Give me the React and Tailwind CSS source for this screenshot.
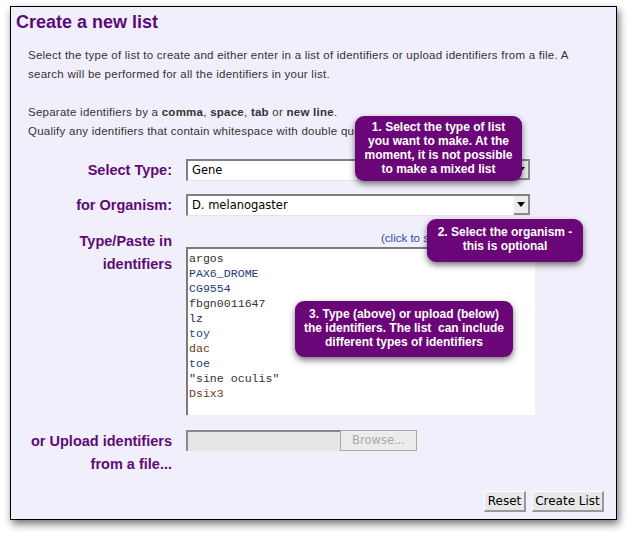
import React from "react";

const sans = "font-['Liberation_Sans',Arial,sans-serif]";
const ui = "font-['DejaVu_Sans',sans-serif]";

const ids = [
  ["argos", "text-[#3a2c2c]"],
  ["PAX6_DROME", "text-[#1d3a78]"],
  ["CG9554", "text-[#1d3a78]"],
  ["fbgn0011647", "text-[#333333]"],
  ["lz", "text-[#2a2a58]"],
  ["toy", "text-[#2a3f70]"],
  ["dac", "text-[#6a3a1a]"],
  ["toe", "text-[#1d3a78]"],
  ['"sine oculis"', "text-[#333333]"],
  ["Dsix3", "text-[#6a3a1a]"],
];

const Label = ({ children }) => (
  <div className={`w-[161px] shrink-0 text-right text-[14.5px] leading-[23px] font-bold text-[#5e0b74] ${sans}`}>
    {children}
  </div>
);

const FakeSelect = ({ value }) => (
  <div className="relative w-[344px] h-[22px] bg-white border-t-2 border-l-2 border-[#808080] border-b border-b-[#e4e4e4] flex items-center">
    <span className={`pl-[4px] text-[11.5px] text-black ${ui}`}>{value}</span>
    <div className="absolute right-0 top-[0px] w-[16px] h-[19px] bg-[#ececec] border-r-2 border-b-2 border-[#8c8c8c] flex items-center justify-center">
      <div className="w-0 h-0 border-l-[4px] border-r-[4px] border-t-[5px] border-l-transparent border-r-transparent border-t-black" />
    </div>
  </div>
);

const Tip = ({ className, children }) => (
  <div
    className={`absolute bg-[#6b0678] rounded-[9px] text-white text-center font-bold text-[12px] leading-[14px] shadow-[0_3px_6px_rgba(0,0,0,0.55)] ${sans} ${className}`}
  >
    {children}
  </div>
);

export default function App() {
  return (
    <div className="relative w-[627px] h-[533px] bg-white overflow-hidden">
      <div className="ml-[10px] mt-[6px] w-[607px] h-[514px] border border-black bg-[#f2effc] shadow-[2px_4px_8px_rgba(0,0,0,0.55)]">
        <h1 className={`pl-[5px] pt-[4px] text-[18px] leading-[22px] font-bold text-[#5c0a7a] ${sans}`}>
          Create a new list
        </h1>

        <div className={`ml-[17px] mt-[13px] w-[560px] text-[11.5px] leading-[19px] tracking-[0.25px] text-[#333333] ${sans}`}>
          <p>
            Select the type of list to create and either enter in a list of identifiers or upload identifiers from a file. A
            search will be performed for all the identifiers in your list.
          </p>
          <p className="mt-[19px]">
            Separate identifiers by a <b>comma</b>, <b>space</b>, <b>tab</b> or <b>new line</b>.
            <br />
            Qualify any identifiers that contain whitespace with double quotes.
          </p>
        </div>

        <div className="mt-[18px]">
          <div className="flex items-center h-[22px]">
            <Label>Select Type:</Label>
            <div className="ml-[14px]">
              <FakeSelect value="Gene" />
            </div>
          </div>

          <div className="flex items-center h-[22px] mt-[13px]">
            <Label>for Organism:</Label>
            <div className="ml-[14px]">
              <FakeSelect value="D. melanogaster" />
            </div>
          </div>

          <div className="flex items-start mt-[14px]">
            <Label>
              Type/Paste in
              <br />
              identifiers
            </Label>
            <div className="ml-[14px]">
              <div className={`h-[17px] leading-[17px] pl-[195px] text-[11.5px] text-[#1f4fa8] ${sans}`}>
                (click to see an example)
              </div>
              <div className="w-[349px] h-[168px] bg-white border-t-2 border-l-2 border-[#7a7a7a] pt-[2px] pl-px">
                {ids.map(([t, c]) => (
                  <div key={t} className={`font-['Liberation_Mono',monospace] text-[11.6px] leading-[15px] whitespace-pre ${c}`}>
                    {t}
                  </div>
                ))}
              </div>
            </div>
          </div>

          <div className="flex items-start mt-[15px]">
            <Label>
              or Upload identifiers
              <br />
              from a file...
            </Label>
            <div className="ml-[14px] flex">
              <div className="w-[154px] h-[21px] bg-[#e6e6e6] border-t-2 border-l-2 border-[#8a8a8a]" />
              <div className={`w-[77px] h-[21px] bg-[#ececec] border border-[#a8a8a8] flex items-center justify-center text-[11.5px] text-[#a8a8a8] ${ui}`}>
                Browse...
              </div>
            </div>
          </div>

          <div className="flex justify-end gap-[6px] pr-[12px] mt-[15px]">
            <button className={`w-[42px] h-[21px] bg-[#e8e8e8] border-t border-l border-white border-r-2 border-b-2 border-r-[#999999] border-b-[#999999] text-[12px] text-black ${ui}`}>
              Reset
            </button>
            <button className={`w-[72px] h-[21px] bg-[#e8e8e8] border-t border-l border-white border-r-2 border-b-2 border-r-[#999999] border-b-[#999999] text-[12px] text-black ${ui}`}>
              Create List
            </button>
          </div>
        </div>
      </div>

      <Tip className="left-[355px] top-[116px] w-[167px] h-[65px] pt-[4px]">
        1. Select the type of list
        <br />
        you want to make. At the
        <br />
        moment, it is not possible
        <br />
        to make a mixed list
      </Tip>
      <Tip className="left-[427px] top-[219px] w-[156px] h-[43px] pt-[6px]">
        2. Select the organism -
        <br />
        this is optional
      </Tip>
      <Tip className="left-[295px] top-[301px] w-[218px] h-[56px] pt-[6px]">
        3. Type (above) or upload (below)
        <br />
        the identifiers. The list&nbsp; can include
        <br />
        different types of identifiers
      </Tip>
    </div>
  );
}
